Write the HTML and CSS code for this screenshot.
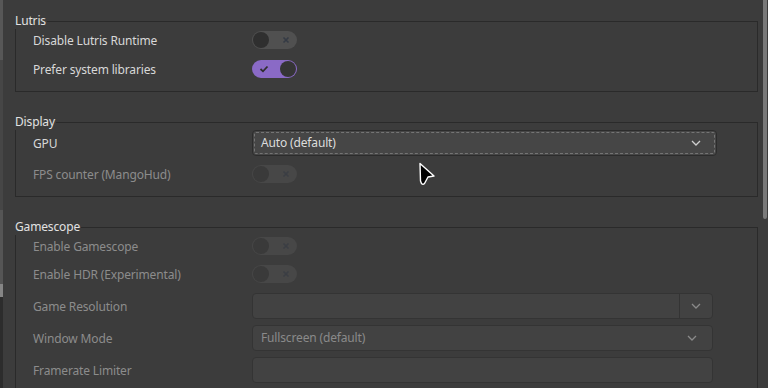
FILE: index.html
```html
<!DOCTYPE html>
<html lang="en">
<head>
    <meta charset="UTF-8">
    <meta name="viewport" content="width=device-width, initial-scale=1.0">
    <title>System options</title>
    <link rel="stylesheet" href="styles.css">
</head>
<body>

    <div class="window">
        <div class="side-edge"></div>

        <div class="content">

            <section class="group">
                <div class="group-title">Lutris</div>
                <div class="group-box">
                    <div class="row">
                        <span class="label">Disable Lutris Runtime</span>
                        <span class="switch">
                            <span class="knob"></span>
                            <svg class="mark" width="8" height="8" viewBox="0 0 8 8"><path d="M1.5 1.5 L6.5 6.5 M6.5 1.5 L1.5 6.5" /></svg>
                        </span>
                    </div>
                    <div class="row">
                        <span class="label">Prefer system libraries</span>
                        <span class="switch on">
                            <svg class="mark" width="10" height="8" viewBox="0 0 10 8"><path d="M1.5 4 L4 6.3 L8.5 1.5" /></svg>
                            <span class="knob"></span>
                        </span>
                    </div>
                </div>
            </section>

            <section class="group">
                <div class="group-title">Display</div>
                <div class="group-box">
                    <div class="row">
                        <span class="label">GPU</span>
                        <div class="combo focused">
                            <span class="combo-text">Auto (default)</span>
                            <svg class="chevron" width="10" height="6" viewBox="0 0 10 6"><path d="M1 1 L5 5 L9 1" /></svg>
                        </div>
                    </div>
                    <div class="row disabled">
                        <span class="label">FPS counter (MangoHud)</span>
                        <span class="switch">
                            <span class="knob"></span>
                            <svg class="mark" width="8" height="8" viewBox="0 0 8 8"><path d="M1.5 1.5 L6.5 6.5 M6.5 1.5 L1.5 6.5" /></svg>
                        </span>
                    </div>
                </div>
            </section>

            <section class="group">
                <div class="group-title">Gamescope</div>
                <div class="group-box narrow">
                    <div class="row disabled">
                        <span class="label">Enable Gamescope</span>
                        <span class="switch">
                            <span class="knob"></span>
                            <svg class="mark" width="8" height="8" viewBox="0 0 8 8"><path d="M1.5 1.5 L6.5 6.5 M6.5 1.5 L1.5 6.5" /></svg>
                        </span>
                    </div>
                    <div class="row disabled">
                        <span class="label">Enable HDR (Experimental)</span>
                        <span class="switch">
                            <span class="knob"></span>
                            <svg class="mark" width="8" height="8" viewBox="0 0 8 8"><path d="M1.5 1.5 L6.5 6.5 M6.5 1.5 L1.5 6.5" /></svg>
                        </span>
                    </div>
                    <div class="row disabled after-switches">
                        <span class="label">Game Resolution</span>
                        <div class="combo with-entry">
                            <span class="combo-text"></span>
                            <span class="combo-button">
                                <svg class="chevron" width="10" height="6" viewBox="0 0 10 6"><path d="M1 1 L5 5 L9 1" /></svg>
                            </span>
                        </div>
                    </div>
                    <div class="row disabled">
                        <span class="label">Window Mode</span>
                        <div class="combo">
                            <span class="combo-text">Fullscreen (default)</span>
                            <svg class="chevron" width="10" height="6" viewBox="0 0 10 6"><path d="M1 1 L5 5 L9 1" /></svg>
                        </div>
                    </div>
                    <div class="row disabled">
                        <span class="label">Framerate Limiter</span>
                        <div class="entry"></div>
                    </div>
                </div>
            </section>

        </div>

        <div class="scroll-track">
            <div class="scroll-thumb"></div>
        </div>

        <!-- mouse pointer -->
        <svg class="pointer" width="20" height="26" viewBox="0 0 20 26">
            <path d="M2 1.5 L16 14 L10 15 L6.5 21.5 Q5 23 3.5 21.5 L2.5 19 Z" />
        </svg>
    </div>

</body>
</html>
```

FILE: styles.css
```css
body {
    margin: 0;
    background-color: #3c3c3c;
    font-family: "Noto Sans", sans-serif;
    font-size: 12px;
    letter-spacing: -0.15px;
    line-height: 16px;
    color: #d8d8d8;
    overflow: hidden;
}

.window {
    position: relative;
    display: flex;
    height: 388px;
    overflow: hidden;
}

.side-edge {
    width: 3px;
    flex-shrink: 0;
    background: linear-gradient(to bottom,
        #575757 0, #575757 60px,
        #464646 60px, #464646 210px,
        #555555 210px, #555555 284px,
        #858585 284px, #858585 297px,
        #2c2c2c 297px);
}

.content {
    flex: 1;
    padding: 13px 5px 0 12px;
}

/* frames */
.group + .group {
    margin-top: 22px;
}

.group-title {
    position: relative;
    width: fit-content;
    height: 16px;
    padding-right: 1px;
    background-color: #3c3c3c;
    color: #e2e2e2;
}

.group-box {
    margin-top: -8px;
    border: 1px solid #2a2a2a;
    padding: 7px 40px 11px 17px;
    display: flex;
    flex-direction: column;
    gap: 7px;
}

.group-box.narrow {
    padding-right: 44px;
    gap: 6px;
}

.row {
    display: grid;
    grid-template-columns: 219px 1fr;
    align-items: center;
    min-height: 22px;
}

.row.after-switches {
    margin-top: 2px;
}

.label {
    padding-top: 2px;
    color: #d8d8d8;
}

.row.disabled .label {
    color: #8c8c8c;
}

/* switches */
.switch {
    justify-self: start;
    width: 45px;
    height: 18px;
    box-sizing: border-box;
    border-radius: 9px;
    background-color: #505050;
    display: flex;
    align-items: center;
    justify-content: space-between;
    padding: 0 1px;
}

.switch .knob {
    width: 16px;
    height: 16px;
    border-radius: 50%;
    background-color: #2f2f2f;
}

.switch .mark {
    margin-right: 6px;
    fill: none;
    stroke: #353b45;
    stroke-width: 1.6;
}

.switch.on {
    background-color: #8a6ac6;
}

.switch.on .mark {
    margin: 0 0 0 6px;
    stroke: #2e2e2e;
    stroke-width: 1.8;
}

.switch.on .knob {
    background-color: #353535;
}

.row.disabled .switch {
    background-color: #474747;
}

.row.disabled .switch .knob {
    background-color: #3a3a3a;
}

.row.disabled .switch .mark {
    stroke: #3b3e44;
}

/* combos and entries */
.combo,
.entry {
    height: 26px;
    box-sizing: border-box;
    border: 1px solid #2c2c2c;
    border-radius: 4px;
    background-color: #464646;
}

.combo {
    display: flex;
    align-items: center;
    justify-content: space-between;
    padding: 0 15px 0 8px;
}

.combo.focused {
    outline: 1px dashed #747474;
    outline-offset: -3px;
}

.combo-text {
    color: #dcdcdc;
}

.chevron {
    fill: none;
    stroke: #cfcfcf;
    stroke-width: 1.3;
}

.row.disabled .combo,
.row.disabled .entry {
    background-color: #424242;
    border-color: #343434;
}

.row.disabled .combo-text {
    color: #8a8a8a;
}

.row.disabled .chevron {
    stroke: #8a8a8a;
}

.combo.with-entry {
    padding: 0;
}

.combo-button {
    width: 32px;
    height: 100%;
    border-left: 1px solid #343434;
    display: flex;
    align-items: center;
    justify-content: center;
}

/* overlay scrollbar */
.scroll-track {
    width: 5px;
    flex-shrink: 0;
}

.scroll-thumb {
    width: 4px;
    height: 219px;
    border-radius: 0 0 2px 2px;
    background-color: #7a7a7a;
}

.pointer {
    position: absolute;
    left: 418px;
    top: 162px;
    fill: #000;
    stroke: #fff;
    stroke-width: 1.4;
    stroke-linejoin: round;
}
```
